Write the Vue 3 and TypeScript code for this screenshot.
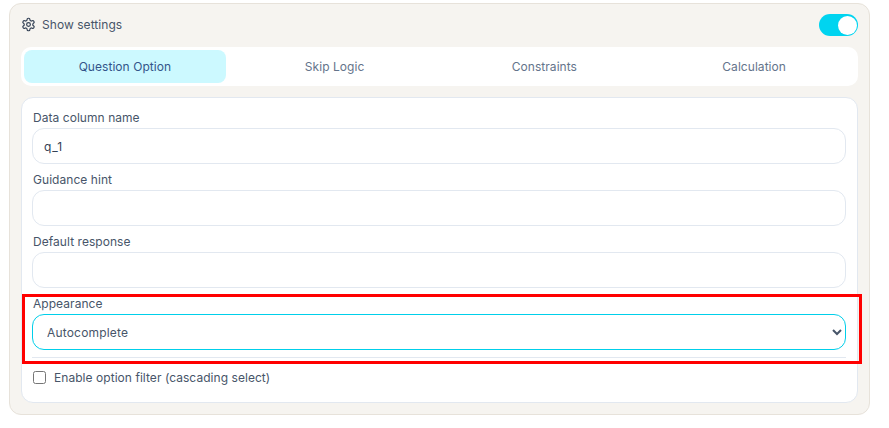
<script setup lang="ts">
const tabs: string[] = ['Question Option', 'Skip Logic', 'Constraints', 'Calculation']
const fields = [
  { label: 'Data column name', value: 'q_1' },
  { label: 'Guidance hint', value: '' },
  { label: 'Default response', value: '' },
]
</script>

<template>
  <div class="page">
    <section class="card">
      <header class="head">
        <div class="title">
          <svg class="gear" viewBox="0 0 24 24" fill="none" stroke="currentColor" stroke-width="1.9" stroke-linecap="round" stroke-linejoin="round">
            <path d="M12.22 2h-.44a2 2 0 0 0-2 2v.18a2 2 0 0 1-1 1.73l-.43.25a2 2 0 0 1-2 0l-.15-.08a2 2 0 0 0-2.73.73l-.22.38a2 2 0 0 0 .73 2.73l.15.1a2 2 0 0 1 1 1.72v.51a2 2 0 0 1-1 1.74l-.15.09a2 2 0 0 0-.73 2.73l.22.38a2 2 0 0 0 2.73.73l.15-.08a2 2 0 0 1 2 0l.43.25a2 2 0 0 1 1 1.73V20a2 2 0 0 0 2 2h.44a2 2 0 0 0 2-2v-.18a2 2 0 0 1 1-1.73l.43-.25a2 2 0 0 1 2 0l.15.08a2 2 0 0 0 2.73-.73l.22-.39a2 2 0 0 0-.73-2.73l-.15-.08a2 2 0 0 1-1-1.74v-.5a2 2 0 0 1 1-1.74l.15-.09a2 2 0 0 0 .73-2.73l-.22-.38a2 2 0 0 0-2.73-.73l-.15.08a2 2 0 0 1-2 0l-.43-.25a2 2 0 0 1-1-1.73V4a2 2 0 0 0-2-2z" />
            <circle cx="12" cy="12" r="3" />
          </svg>
          <span class="title-text">Show settings</span>
        </div>
        <div class="toggle"><span class="knob"></span></div>
      </header>

      <nav class="tabs">
        <div v-for="(t, i) in tabs" :key="t" class="tab" :class="{ active: i === 0 }">{{ t }}</div>
      </nav>

      <div class="body">
        <div v-for="f in fields" :key="f.label" class="field">
          <label class="label">{{ f.label }}</label>
          <input class="input" type="text" :value="f.value" />
        </div>
        <div class="field appearance">
          <label class="label">Appearance</label>
          <select class="select">
            <option>Autocomplete</option>
          </select>
          <span class="highlight"></span>
        </div>
        <hr class="rule" />
        <label class="check">
          <input type="checkbox" class="box" />
          <span>Enable option filter (cascading select)</span>
        </label>
      </div>
    </section>
  </div>
</template>

<style>
html, body { margin: 0; background: #fff; }
</style>

<style scoped>
.page {
  width: 889px;
  height: 428px;
  box-sizing: border-box;
  padding: 3px 19px 13px 9px;
  font-family: Inter, "Liberation Sans", sans-serif;
  font-size: 12px;
  letter-spacing: 0.05px;
  color: #475569;
}
.card {
  box-sizing: border-box;
  height: 412px;
  background: #f6f4f0;
  border: 1px solid #e7e2da;
  border-radius: 12px;
  padding: 10px 11px 11px;
}
.head {
  display: flex;
  justify-content: space-between;
  align-items: center;
  height: 22px;
  margin-bottom: 11px;
}
.title {
  display: flex;
  align-items: center;
  gap: 6px;
  color: #475569;
}
.title-text { margin-top: -1px; }
.gear { width: 15px; height: 15px; color: #334155; margin-top: -1px; }
.toggle {
  width: 39px;
  height: 22px;
  border-radius: 11px;
  background: #00d4f0;
  display: flex;
  align-items: center;
  justify-content: flex-end;
  padding-right: 1px;
  box-sizing: border-box;
}
.knob {
  width: 19px;
  height: 19px;
  border-radius: 50%;
  background: #fff;
}
.tabs {
  display: grid;
  grid-template-columns: repeat(4, 1fr);
  gap: 8px;
  background: #fff;
  border-radius: 10px;
  padding: 3px;
  height: 39px;
  box-sizing: border-box;
  margin-bottom: 11px;
}
.tab {
  display: flex;
  align-items: center;
  justify-content: center;
  border-radius: 8px;
  color: #64748b;
}
.tab.active {
  background: #ccf9ff;
  color: #33558a;
}
.body {
  box-sizing: border-box;
  height: 306px;
  background: #fff;
  border: 1px solid #e2e8f0;
  border-radius: 12px;
  padding: 11px 11px 0 10px;
}
.field { display: flex; flex-direction: column; position: relative; }
.label {
  height: 19px;
  line-height: 17px;
  padding-left: 1px;
  color: #475569;
}
.field + .field { margin-top: 7px; }
.input, .select {
  box-sizing: border-box;
  width: 100%;
  height: 36px;
  border: 1px solid #e2e8f0;
  border-radius: 12px;
  background: #fff;
  font: inherit;
  letter-spacing: 0.18px;
  color: #334155;
  outline: none;
}
.input { padding: 0 11px; letter-spacing: 0.8px; }
.select {
  padding: 0 10px;
  border-color: #00cfea;
  color: #475569;
}
.highlight {
  position: absolute;
  left: -10px;
  top: -1px;
  width: 840px;
  height: 70px;
  box-sizing: border-box;
  border: 3px solid #ff0000;
  pointer-events: none;
}
.rule {
  border: none;
  border-top: 1px solid #e2e8f0;
  margin: 7px 0 0;
}
.check {
  display: flex;
  align-items: center;
  gap: 8px;
  margin-top: 9px;
  height: 20px;
  color: #475569;
}
.box {
  appearance: none;
  margin: 1px 0 0 1px;
  width: 13px;
  height: 13px;
  box-sizing: border-box;
  border: 1px solid #767676;
  border-radius: 2.5px;
  background: #fff;
}
</style>
